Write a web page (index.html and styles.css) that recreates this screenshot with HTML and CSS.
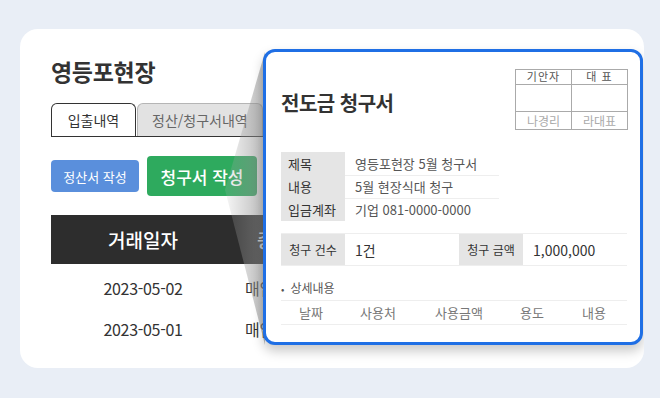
FILE: index.html
```html
<!DOCTYPE html>
<html lang="ko">
<head>
    <meta charset="UTF-8">
    <title>영등포현장 - 전도금 청구서</title>
    <link rel="stylesheet" href="styles.css">
</head>
<body>

    <div class="card">
        <h1 class="site-title">영등포현장</h1>

        <div class="tabs">
            <div class="tab active">입출내역</div>
            <div class="tab">정산/청구서내역</div>
        </div>

        <div class="actions">
            <button class="btn btn-blue">정산서 작성</button>
            <button class="btn btn-green">청구서 작성</button>
        </div>

        <div class="ledger-wrap">
            <table class="ledger">
                <thead>
                    <tr><th class="col-date">거래일자</th><th class="col-type">증빙</th></tr>
                </thead>
                <tbody>
                    <tr><td class="col-date">2023-05-02</td><td class="col-type">매입</td></tr>
                    <tr><td class="col-date">2023-05-01</td><td class="col-type">매입</td></tr>
                </tbody>
            </table>
        </div>

        <div class="cone"></div>

        <div class="popup">
            <div class="popup-head">
                <h2 class="doc-title">전도금 청구서</h2>
                <table class="approval">
                    <tr class="ap-head"><td>기안자</td><td>대 표</td></tr>
                    <tr class="ap-sign"><td></td><td></td></tr>
                    <tr class="ap-name"><td>나경리</td><td>라대표</td></tr>
                </table>
            </div>

            <table class="info">
                <tr><th>제목</th><td>영등포현장 5월 청구서</td></tr>
                <tr><th>내용</th><td>5월 현장식대 청구</td></tr>
                <tr><th>입금계좌</th><td>기업 081-0000-0000</td></tr>
            </table>

            <div class="summary">
                <div class="sum-label">청구 건수</div>
                <div class="sum-value count">1건</div>
                <div class="sum-label">청구 금액</div>
                <div class="sum-value">1,000,000</div>
            </div>

            <div class="detail-title">상세내용</div>
            <div class="detail-head">
                <span class="d1">날짜</span>
                <span class="d2">사용처</span>
                <span class="d3">사용금액</span>
                <span class="d4">용도</span>
                <span class="d5">내용</span>
            </div>
        </div>
    </div>

</body>
</html>
```

FILE: styles.css
```css
body {
    margin: 0;
    background-color: #e9eef6;
    font-family: "Noto Sans CJK KR", "Noto Sans", sans-serif;
    color: #333;
}

.card {
    position: relative;
    margin: 29px 0 0 20px;
    width: 624px;
    height: 339px;
    box-sizing: border-box;
    padding: 26px 0 0 31px;
    background: #fff;
    border-radius: 18px;
    overflow: hidden;
}

.site-title { margin: 0; font-size: 23px; font-weight: 700; line-height: 32px; color: #333; letter-spacing: -0.3px; }

.tabs { display: flex; margin-top: 16px; border-bottom: 1px solid #333; width: 560px; }
.tab {
    height: 32px; line-height: 32px; padding: 0 14px; font-size: 14px; color: #666;
    background: #e2e2e2; border: 1px solid #b5b5b5; border-bottom: none; border-radius: 6px 6px 0 0;
    margin-right: 1px;
}
.tab.active { background: #fff; color: #333; border-color: #333; width: 55px; text-align: center; }

.actions { display: flex; align-items: center; gap: 8px; margin-top: 19px; }
.btn { border: none; border-radius: 4px; color: #fff; font-family: inherit; cursor: pointer; padding: 0; }
.btn-blue { width: 88px; height: 32px; background: #5a8fdc; font-size: 13px; }
.btn-green { width: 110px; height: 40px; background: #2eaa5e; font-size: 17px; font-weight: 500; }

.ledger-wrap { margin-top: 19px; width: 213px; overflow: hidden; }
.ledger { border-collapse: collapse; width: 560px; }
.ledger th { background: #2d2d2d; color: #fff; font-size: 19px; font-weight: 500; height: 49px; padding: 0; }
.ledger td { font-size: 16px; color: #333; height: 41px; padding: 0; letter-spacing: -0.3px; }
.ledger tbody tr:first-child td { padding-top: 3px; }
.ledger .col-date { width: 184px; text-align: center; }
.ledger td.col-type { text-align: left; padding-left: 10px; }
.ledger th.col-type { text-align: left; padding-left: 22px; }

.cone {
    position: absolute; left: 205px; top: 23px; width: 40px; height: 293px;
    clip-path: polygon(100% 0, 0 47%, 100% 100%);
    background: linear-gradient(to right, rgba(200,200,200,0.15), rgba(140,140,140,0.6));
}

.popup {
    position: absolute; left: 243px; top: 20px; width: 380px; height: 296px; box-sizing: border-box;
    border: 3px solid #1f6fe5; border-radius: 12px; background: #fff;
    box-shadow: 0 6px 12px rgba(0,0,0,0.22);
    padding: 16px 12px 0 15px;
}

.popup-head { display: flex; justify-content: space-between; align-items: center; height: 61px; }
.doc-title { margin: 8px 0 0; font-size: 20px; font-weight: 700; color: #333; letter-spacing: -0.5px; }

.approval { border-collapse: collapse; width: 113px; margin-top: 1px; }
.approval td { border: 1px solid #aaa; text-align: center; padding: 0; width: 57px; }
.ap-head td { height: 14px; font-size: 11px; line-height: 13px; color: #555; letter-spacing: 1px; }
.ap-sign td { height: 26px; }
.ap-name td { height: 17px; font-size: 12px; color: #aaa; }

.info { border-collapse: collapse; margin-top: 23px; width: 218px; }
.info th { width: 57px; background: #e5e5e5; text-align: left; font-weight: 400; font-size: 13px; padding: 0 0 0 7px; height: 23px; color: #333; }
.info td { padding: 0 0 0 10px; font-size: 13px; color: #555; border-bottom: 1px solid #eee; }
.info tr:last-child td { border-bottom: none; }

.summary { display: flex; align-items: center; margin-top: 12px; height: 31px; border-top: 1px solid #eee; border-bottom: 1px solid #eee; width: 346px; }
.sum-label { width: 64px; height: 31px; line-height: 31px; background: #e5e5e5; font-size: 12px; text-align: center; color: #333; white-space: nowrap; }
.sum-value { padding-left: 10px; font-size: 14px; color: #333; }
.sum-value.count { width: 104px; }

.detail-title { margin-top: 13px; font-size: 12px; color: #555; line-height: 18px; }
.detail-title::before { content: "•"; margin-right: 6px; font-size: 10px; }

.detail-head { display: flex; margin-top: 2px; height: 23px; align-items: center; width: 346px; border-top: 1px solid #eee; border-bottom: 1px solid #eee; font-size: 13px; color: #777; }
.detail-head span { text-align: center; }
.d1 { width: 60px; }
.d2 { width: 74px; }
.d3 { width: 88px; }
.d4 { width: 58px; }
.d5 { width: 66px; }
```
